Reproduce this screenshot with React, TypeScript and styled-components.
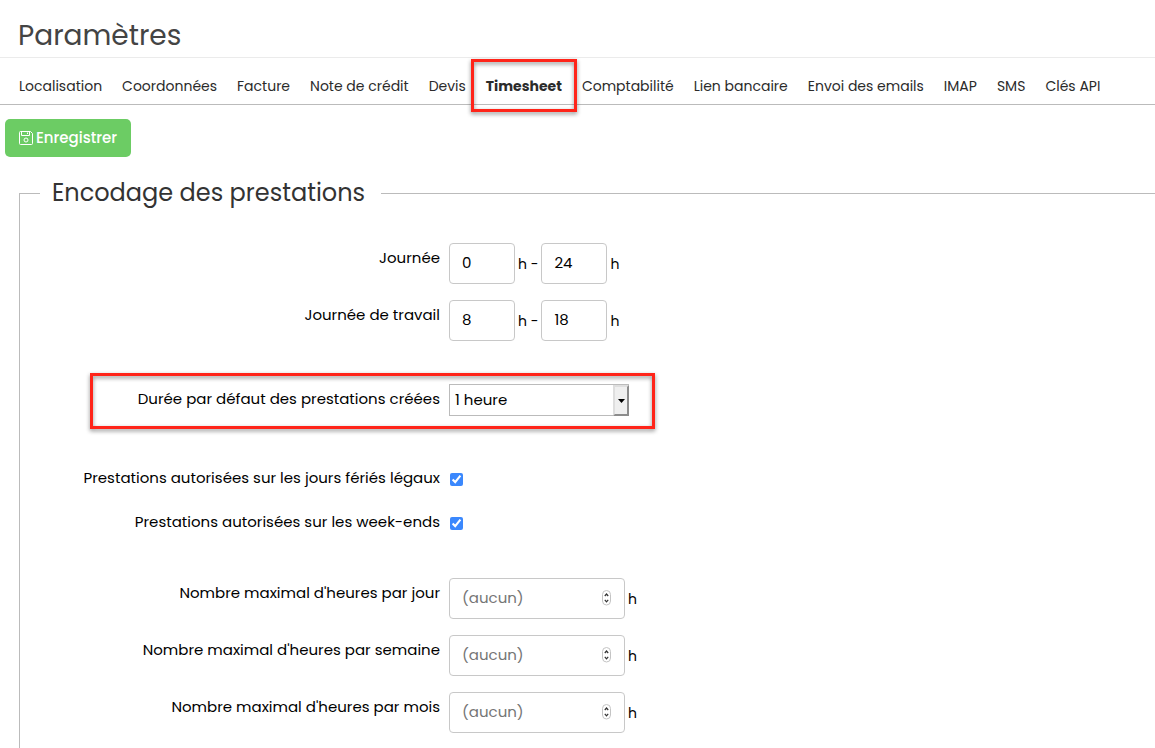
import React from "react";
import styled, { createGlobalStyle, css } from "styled-components";

const GlobalStyle = createGlobalStyle`
  *, *::before, *::after { box-sizing: border-box; }
  body {
    margin: 0;
    background: #fff;
    color: #000;
    font-family: Poppins, Inter, "Open Sans", sans-serif;
    font-size: 15px;
    line-height: 22px;
    overflow-x: hidden;
  }
  input, select, button { font: inherit; color: inherit; }
`;

const PageHeader = styled.header`
  padding: 16px 18px 1px;
  border-bottom: 1px solid #ebebeb;
`;

const Title = styled.h1`
  margin: 0;
  font-size: 28px;
  line-height: 40px;
  font-weight: 400;
  color: #444;
`;

const Tabs = styled.nav`
  display: flex;
  gap: 20px;
  padding: 16px 19px 6px;
  border-bottom: 1px solid #bbb;
  white-space: nowrap;
`;

const highlight = css`
  content: "";
  position: absolute;
  border: 3px solid #ff2419;
  filter: drop-shadow(0 2px 2px rgba(0, 0, 0, 0.45));
  pointer-events: none;
`;

const Tab = styled.a<{ $active?: boolean }>`
  position: relative;
  font-size: 14px;
  line-height: 24px;
  color: #2b2b2b;
  text-decoration: none;
  font-weight: ${(p) => (p.$active ? 700 : 400)};
  ${(p) =>
    p.$active &&
    css`
      &::after {
        ${highlight}
        inset: -15px -15px -14px;
      }
    `}
`;

const SaveButton = styled.button`
  display: flex;
  align-items: center;
  gap: 3px;
  height: 38px;
  margin: 14px 5px 0;
  padding: 0 14px;
  border: 0;
  border-radius: 5px;
  background: #6ccc64;
  color: #fff;
  font-weight: 500;
`;

const Section = styled.fieldset`
  min-width: 0;
  margin: 16px 0 0 19px;
  padding: 30px 0 60px;
  border: 1px solid #bbb;
  border-right: 0;
`;

const Legend = styled.legend`
  margin-left: 20px;
  padding: 0 16px 0 12px;
  font-size: 24px;
  line-height: 40px;
  color: #333;
`;

const Row = styled.div<{ $height: number; $gap?: number; $highlighted?: boolean }>`
  position: relative;
  display: grid;
  grid-template-columns: 420px 1fr;
  column-gap: 9px;
  min-height: ${(p) => p.$height}px;
  margin-bottom: ${(p) => p.$gap ?? 16}px;
  ${(p) =>
    p.$highlighted &&
    css`
      &::after {
        ${highlight}
        top: -11px;
        left: 70px;
        width: 565px;
        height: 56px;
      }
    `}
`;

const Label = styled.label`
  padding-top: 4px;
  text-align: right;
`;

const Controls = styled.div`
  display: flex;
  align-items: center;
  gap: 3px;
`;

const Unit = styled.span`
  font-size: 14px;
`;

const Field = styled.span`
  position: relative;
  display: flex;
`;

const NumberInput = styled.input<{ $wide?: boolean }>`
  width: ${(p) => (p.$wide ? 176 : 66)}px;
  height: 41px;
  padding: 0 12px 2px;
  border: 1px solid #c8c8c8;
  border-radius: 4px;
  background: #fff;
  appearance: textfield;
  &::-webkit-inner-spin-button { appearance: none; margin: 0; }
  &::placeholder { color: #757575; opacity: 1; }
`;

const Stepper = styled.svg`
  position: absolute;
  top: 12px;
  right: 13px;
  pointer-events: none;
`;

const Select = styled.select`
  width: 180px;
  height: 32px;
  padding: 0 20px 0 5px;
  border: 1px solid #bbb;
  border-radius: 0;
  background: #fff;
  appearance: none;
`;

const SelectArrow = styled.span`
  position: absolute;
  top: 1px;
  right: 0;
  bottom: 0;
  width: 16px;
  display: flex;
  align-items: center;
  justify-content: center;
  border: 2px solid;
  border-color: #dedede #8c8c8c #8c8c8c #dedede;
  background: #efefef;
  pointer-events: none;
`;

const Checkbox = styled.input`
  width: 13px;
  height: 13px;
  margin: 0 1px;
  accent-color: #3b88fd;
`;

const SaveIcon = () => (
  <svg width="14" height="14" viewBox="0 0 14 14" fill="none" stroke="#fff" aria-hidden="true">
    <path d="M1.5.5h10l2 2v10a1 1 0 0 1-1 1h-11a1 1 0 0 1-1-1v-11a1 1 0 0 1 1-1z" />
    <path d="M2.5.5v4h8v-4M8.5 1.5v1.5" />
    <circle cx="7" cy="9" r="2" />
  </svg>
);

const tabs = [
  "Localisation", "Coordonnées", "Facture", "Note de crédit", "Devis", "Timesheet",
  "Comptabilité", "Lien bancaire", "Envoi des emails", "IMAP", "SMS", "Clés API",
];

function HourRange({ id, label, from, to, gap }: { id: string; label: string; from: number; to: number; gap?: number }) {
  return (
    <Row $height={41} $gap={gap}>
      <Label htmlFor={id}>{label}</Label>
      <Controls>
        <NumberInput id={id} type="number" defaultValue={from} />
        <Unit>h -</Unit>
        <NumberInput type="number" defaultValue={to} aria-label={`${label} (fin)`} />
        <Unit>h</Unit>
      </Controls>
    </Row>
  );
}

function CheckRow({ id, label, gap }: { id: string; label: string; gap: number }) {
  return (
    <Row $height={32} $gap={gap}>
      <Label htmlFor={id}>{label}</Label>
      <Controls>
        <Checkbox id={id} type="checkbox" defaultChecked />
      </Controls>
    </Row>
  );
}

function LimitRow({ id, label }: { id: string; label: string }) {
  return (
    <Row $height={41}>
      <Label htmlFor={id}>{label}</Label>
      <Controls>
        <Field>
          <NumberInput $wide id={id} type="number" placeholder="(aucun)" />
          <Stepper width="10" height="16" viewBox="0 0 10 16" fill="none" aria-hidden="true">
            <rect x=".5" y=".5" width="8" height="14.5" rx="4" fill="#fff" stroke="#c4c4c4" />
            <path d="M2.8 6 4.5 4l1.7 2M2.8 9.8l1.7 2 1.7-2" stroke="#333" strokeWidth="1.2" />
          </Stepper>
        </Field>
        <Unit>h</Unit>
      </Controls>
    </Row>
  );
}

export default function App() {
  return (
    <>
      <GlobalStyle />
      <PageHeader>
        <Title>Paramètres</Title>
      </PageHeader>
      <Tabs>
        {tabs.map((name) => (
          <Tab key={name} href="#" $active={name === "Timesheet"}>{name}</Tab>
        ))}
      </Tabs>
      <main>
        <SaveButton type="button">
          <SaveIcon />
          Enregistrer
        </SaveButton>
        <Section>
          <Legend>Encodage des prestations</Legend>
          <HourRange id="day" label="Journée" from={0} to={24} />
          <HourRange id="workday" label="Journée de travail" from={8} to={18} gap={43} />
          <Row $height={32} $gap={47} $highlighted>
            <Label htmlFor="duration">Durée par défaut des prestations créées</Label>
            <Controls>
              <Field>
                <Select id="duration" defaultValue="1">
                  <option value="1">1 heure</option>
                </Select>
                <SelectArrow>
                  <svg width="7" height="4" viewBox="0 0 7 4" aria-hidden="true">
                    <path d="M0 0h7L3.5 4z" fill="#000" />
                  </svg>
                </SelectArrow>
              </Field>
            </Controls>
          </Row>
          <CheckRow id="holidays" label="Prestations autorisées sur les jours fériés légaux" gap={12} />
          <CheckRow id="weekends" label="Prestations autorisées sur les week-ends" gap={39} />
          <LimitRow id="max-day" label="Nombre maximal d'heures par jour" />
          <LimitRow id="max-week" label="Nombre maximal d'heures par semaine" />
          <LimitRow id="max-month" label="Nombre maximal d'heures par mois" />
        </Section>
      </main>
    </>
  );
}
